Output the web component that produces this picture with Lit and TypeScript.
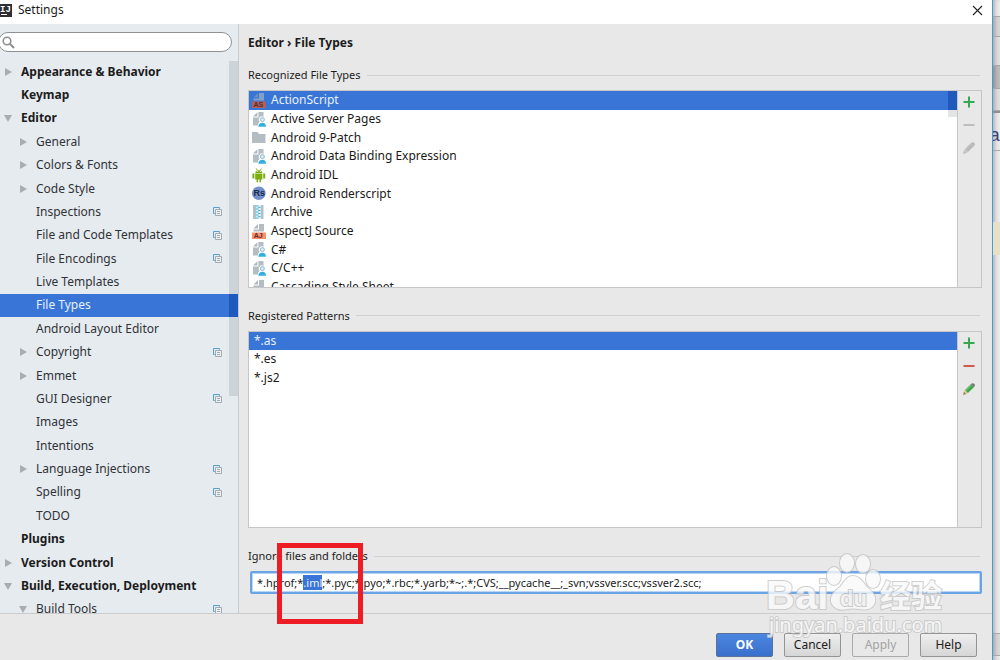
import { LitElement, html, css, svg, nothing } from "lit";
import { customElement, state, query } from "lit/decorators.js";
import { classMap } from "lit/directives/class-map.js";

interface TreeItem {
  label: string;
  level: 0 | 1;
  arrow?: "open" | "closed";
  project?: boolean;
}

const TREE: TreeItem[] = [
  { label: "Appearance & Behavior", level: 0, arrow: "closed" },
  { label: "Keymap", level: 0 },
  { label: "Editor", level: 0, arrow: "open" },
  { label: "General", level: 1, arrow: "closed" },
  { label: "Colors & Fonts", level: 1, arrow: "closed" },
  { label: "Code Style", level: 1, arrow: "closed" },
  { label: "Inspections", level: 1, project: true },
  { label: "File and Code Templates", level: 1, project: true },
  { label: "File Encodings", level: 1, project: true },
  { label: "Live Templates", level: 1 },
  { label: "File Types", level: 1 },
  { label: "Android Layout Editor", level: 1 },
  { label: "Copyright", level: 1, arrow: "closed", project: true },
  { label: "Emmet", level: 1, arrow: "closed" },
  { label: "GUI Designer", level: 1, project: true },
  { label: "Images", level: 1 },
  { label: "Intentions", level: 1 },
  { label: "Language Injections", level: 1, arrow: "closed", project: true },
  { label: "Spelling", level: 1, project: true },
  { label: "TODO", level: 1 },
  { label: "Plugins", level: 0 },
  { label: "Version Control", level: 0, arrow: "closed" },
  { label: "Build, Execution, Deployment", level: 0, arrow: "open" },
  { label: "Build Tools", level: 1, arrow: "open", project: true },
];

const FILE_TYPES: [string, string][] = [
  ["ActionScript", "as"],
  ["Active Server Pages", "user"],
  ["Android 9-Patch", "folder"],
  ["Android Data Binding Expression", "user"],
  ["Android IDL", "android"],
  ["Android Renderscript", "rs"],
  ["Archive", "archive"],
  ["AspectJ Source", "aj"],
  ["C#", "user"],
  ["C/C++", "user"],
  ["Cascading Style Sheet", "page"],
];

const PATTERNS = ["*.as", "*.es", "*.js2"];

const IGNORED =
  "*.hprof;*.iml;*.pyc;*.pyo;*.rbc;*.yarb;*~;.*;CVS;__pycache__;_svn;vssver.scc;vssver2.scc;";

const halfPage = svg`<path d="M1.5 4.5 L6 0 V4.5Z" fill="#9aa7b0" opacity=".8"/><path d="M7 0H12V7.5H1.5V5.5H7Z" fill="#b4bdc3"/>`;

const ICONS: Record<string, unknown> = {
  as: svg`<g opacity=".6">${halfPage}</g><path d="M0 8.5H14V15H0Z" fill="#b0605e"/><text x="1.4" y="14.4" class="tag">AS</text>`,
  aj: svg`${halfPage}<path d="M0 8.5H14V15H0Z" fill="#fb8f6c"/><text x="1.8" y="14.4" class="tag">AJ</text>`,
  page: svg`<path d="M1.5 4.5 L6 0 V4.5Z" fill="#9aa7b0" opacity=".8"/><path d="M7 0H12V14H1.5V5.5H7Z" fill="#b4bdc3"/>`,
  user: svg`<path d="M1 4.5 L5.4 .3 V4.5Z" fill="#9aa7b0" opacity=".8"/><path d="M6.4 0H11.5V5A3 3 0 0 0 7.6 9.5L6 12V13.5H1V5.5H6.4Z" fill="#b4bdc3"/><circle cx="10.4" cy="7.6" r="2" fill="#dce9ef" stroke="#8fbccf"/><path d="M6.3 14.8C6.6 12.1 8 10.8 10.4 10.8S13.8 12.1 14 14.8Z" fill="#2fb0e0"/>`,
  folder: svg`<path d="M0 2H5.5L7 4H13.5V13H0Z" fill="#b4bdc3"/>`,
  android: svg`<path d="M3.2 4.9A3.7 3.5 0 0 1 10.4 4.9ZM3.2 5.6H10.4V11.6H9V14.2H7.5V11.6H6.1V14.2H4.6V11.6H3.2ZM.4 5.6H2.4V10.4H.4ZM11.2 5.6H13.2V10.4H11.2Z" fill="#7cae12"/><path d="M4.2.4 5.3 2.4M9.4.4 8.3 2.4" stroke="#7cae12" stroke-width=".9"/><circle cx="5.3" cy="3.5" r=".5" fill="#fff"/><circle cx="8.3" cy="3.5" r=".5" fill="#fff"/>`,
  rs: svg`<circle cx="6.8" cy="7.2" r="6.8" fill="#7390cb"/><text x="1.6" y="10.2" class="round">Rs</text>`,
  archive: svg`<path d="M1 0H4V14H1ZM8.6 0H11.5V14H8.6Z" fill="#b4c0c7"/><path d="M4 0H8.6V14H4Z" fill="#d9f0f8"/><path d="M4 1H6.5M6 2.5H8.6M4 4H6.5M6 5.5H8.6M4 7H6.5M6 8.5H8.6M4 10H6.5M6 11.5H8.6M4 13H6.5" stroke="#4eb8dc" stroke-width="1.2"/>`,
};

const fileIcon = (name: string) =>
  html`<svg class="file-icon" width="14" height="15" viewBox="0 0 14 15" aria-hidden="true">${ICONS[name]}</svg>`;

const projectIcon = html`<svg class="project" width="9" height="9" viewBox="0 0 9 9" aria-hidden="true">
  <path d="M6.5 1.8V.5H.5V6.5H1.8" fill="none" stroke="#5d9fc4" />
  <path d="M2.5 2.5H8.5V8.5H2.5Z" fill="#eef1f3" stroke="#a2abb2" />
  <path d="M4 4.5H7M4 6.5H7" stroke="#a2abb2" />
</svg>`;

const plus = html`<svg width="12" height="12" viewBox="0 0 12 12" aria-hidden="true">
  <path d="M6 .5V11.5M.5 6H11.5" stroke="#36a852" stroke-width="2" />
</svg>`;
const minus = (color: string) => html`<svg width="12" height="12" viewBox="0 0 12 12" aria-hidden="true">
  <path d="M.5 6H11.5" stroke=${color} stroke-width="2" />
</svg>`;
const pencil = (active: boolean) => html`<svg width="12" height="12" viewBox="0 0 12 12" aria-hidden="true">
  <path d="M0 12 1 8.6 3.4 11Z" fill=${active ? "#8f8474" : "#b9b9b9"} />
  <path d="M1 8.6 2 7 5 10 3.4 11Z" fill=${active ? "#e8c48c" : "#c6c6c6"} />
  <path d="M2 7 7.8 1.2 10.8 4.2 5 10Z" fill=${active ? "#3fa64a" : "#b9b9b9"} />
  <path d="M3 7.4 8.3 2.2" stroke=${active ? "#8fd68f" : "#c6c6c6"} />
  <path d="M7.8 1.2 8.8.4Q10 -.2 11.2.8T11.6 3.2L10.8 4.2Z" fill=${active ? "#777" : "#b9b9b9"} />
</svg>`;

@customElement("app-root")
export class AppRoot extends LitElement {
  @state() private page = "File Types";
  @state() private fileType = 0;
  @state() private pattern = 0;
  @query("#ignored") private ignored!: HTMLInputElement;

  static styles = css`
    :host {
      display: block;
      font: 12px/16px "Noto Sans", "Noto Sans CJK SC", sans-serif;
      color: #1c1c1c;
    }
    * {
      box-sizing: border-box;
    }
    button,
    input {
      font: inherit;
      color: inherit;
    }
    ul {
      list-style: none;
      margin: 0;
      padding: 0;
    }
    h1,
    h2 {
      margin: 0;
      font-size: 12px;
    }
    .screen {
      position: relative;
      display: flex;
      height: 100vh;
      overflow: hidden;
    }
    .dialog {
      flex: 1;
      min-width: 0;
      display: flex;
      flex-direction: column;
      background: #e8e8e8;
      border-right: 1px solid #4a9ad6;
    }
    .titlebar {
      display: flex;
      align-items: center;
      gap: 6px;
      height: 24px;
      padding: 0 9px 4px 0;
      background: #fff;
    }
    .titlebar .name {
      flex: 1;
    }
    .logo text {
      font: bold 9px "Liberation Mono", monospace;
      fill: #fff;
    }
    .close {
      display: flex;
      padding: 0;
      border: 0;
      background: none;
    }
    .main {
      flex: 1;
      min-height: 0;
      display: flex;
      border-bottom: 1px solid #c9cbcd;
    }
    .sidebar {
      position: relative;
      flex: none;
      width: 239px;
      display: flex;
      flex-direction: column;
      background: #e6ebf0;
      border-right: 1px solid #c8cbcd;
      overflow: hidden;
    }
    .search {
      position: relative;
      display: flex;
      margin: 8px 6px 8px -2px;
    }
    .search input {
      width: 100%;
      height: 20px;
      padding: 0 10px 0 22px;
      border: 1px solid #8f9193;
      border-radius: 10px;
      background: #fff;
      outline: 0;
    }
    .search svg {
      position: absolute;
      left: 4px;
      top: 4px;
    }
    .tree {
      flex: 1;
      display: grid;
      grid-auto-rows: 1fr;
      margin-bottom: -8px;
    }
    .node {
      display: flex;
      align-items: center;
      min-height: 0;
      padding: 0 16px 0 4px;
      white-space: nowrap;
    }
    .node.top {
      font-weight: bold;
    }
    .node.child {
      padding-left: 19px;
      color: #303336;
    }
    .node .twisty {
      flex: none;
      width: 17px;
      display: flex;
    }
    .node .text {
      flex: 1;
    }
    .thumb {
      position: absolute;
      right: 0;
      width: 9px;
      background: rgba(0, 20, 40, 0.11);
    }
    .sidebar .thumb {
      top: 37px;
      height: 335px;
    }
    .cap {
      width: 9px;
      align-self: stretch;
      margin-left: auto;
      background: #2462cf;
    }
    .node.selected,
    .row.selected {
      padding-right: 0;
      background: #3875d7;
      color: #e8f0fb;
    }
    .pane {
      flex: 1;
      min-width: 0;
      display: flex;
      flex-direction: column;
      padding: 11px 10px 19px 9px;
    }
    .crumb {
      margin-bottom: 16px;
    }
    .section {
      display: flex;
      align-items: center;
      gap: 6px;
      margin-bottom: 7px;
    }
    .section h2,
    .section label {
      font-size: 11px;
      font-weight: normal;
    }
    .section::after {
      content: "";
      flex: 1;
      height: 1px;
      margin-right: 2px;
      background: #d0d0d0;
    }
    .box {
      flex: 1;
      min-height: 0;
      display: flex;
      margin-bottom: 20px;
      border: 1px solid #c6c6c6;
    }
    .list {
      position: relative;
      flex: 1;
      display: flex;
      flex-direction: column;
      background: #fff;
      overflow: hidden;
    }
    .types {
      flex: 1;
      display: grid;
      grid-auto-rows: 1fr;
      margin-bottom: -10px;
    }
    .patterns {
      display: grid;
      grid-auto-rows: 1fr;
      height: 56px;
    }
    .row {
      display: flex;
      align-items: center;
      gap: 5px;
      min-height: 0;
      padding-left: 3px;
      color: #1a1a1a;
    }
    .patterns .row {
      padding-left: 5px;
    }
    .list .thumb {
      top: 0;
      height: 26px;
    }
    .tag {
      font: bold 7px "Liberation Sans", sans-serif;
      fill: #5a2c2c;
    }
    .round {
      font: bold 9px "Liberation Sans", sans-serif;
      fill: #1d2a4a;
    }
    .tools {
      flex: none;
      width: 24px;
      display: flex;
      flex-direction: column;
      align-items: center;
      gap: 11px;
      padding: 5px 2px 0 0;
      border-left: 1px solid #c6c6c6;
    }
    .tools button {
      display: flex;
      padding: 0;
      border: 0;
      background: none;
    }
    .ignored {
      height: 23px;
      margin-left: 2px;
      padding: 0 5px;
      border: 2px solid #6ba4e4;
      border-radius: 2px;
      box-shadow: inset 0 0 0 1px #b9d6f6;
      background: #fff;
      font-size: 11px;
      outline: 0;
    }
    .ignored::selection {
      background: #3875d7;
      color: #e8f0fb;
    }
    .footer {
      display: flex;
      justify-content: flex-end;
      gap: 11px;
      height: 46px;
      padding: 19px 15px 0;
    }
    .footer button {
      width: 57px;
      height: 24px;
      padding: 0;
      border: 1px solid #949494;
      border-radius: 2px;
      background: linear-gradient(#eeeeee, #d6d6d6);
    }
    .footer .primary {
      border-color: #5b7199;
      background: linear-gradient(#4a86e0, #3a70cc);
      color: #fff;
      font-weight: bold;
    }
    .footer button:disabled {
      border-color: #aaa;
      background: #e8e8e8;
      color: #a2a2a2;
    }
    .behind {
      flex: none;
      width: 7px;
      display: flex;
      flex-direction: column;
      background: #ececec;
      overflow: hidden;
      box-shadow: inset 4px 0 4px -2px rgba(0, 0, 0, 0.25);
    }
    .behind div {
      flex: none;
      border-bottom: 1px solid #a8a8a8;
    }
    .b1 {
      height: 17px;
    }
    .b2 {
      height: 20px;
      background: rgba(0, 0, 0, 0.09);
    }
    .b3 {
      height: 29px;
      background: rgba(0, 0, 0, 0.05);
    }
    .b4 {
      height: 23px;
      background: rgba(0, 0, 0, 0.2);
    }
    .b5 {
      height: 22px;
      background: rgba(0, 0, 0, 0.05);
    }
    .b6 {
      display: flex;
      align-items: flex-end;
      height: 40px;
      padding-bottom: 2px;
      font: 19px/24px "Liberation Mono", monospace;
      color: #3b3f78;
      border-top: 2px solid #909090;
      text-indent: -4px;
    }
    .b7 {
      height: 71px;
    }
    .b8 {
      height: 33px;
      background: #e8e0c4;
    }
    .behind .b7,
    .behind .b8 {
      border-bottom: 0;
    }
    .behind .b9 {
      flex: 1;
    }
    .b10 {
      height: 22px;
      background: rgba(0, 0, 0, 0.08);
    }
    .behind .b11 {
      height: 4px;
      border-bottom: 0;
    }
    .marker {
      position: absolute;
      left: 277px;
      bottom: 36px;
      width: 86px;
      height: 81px;
      border: 5px solid #ee1c25;
      pointer-events: none;
    }
    .watermark {
      position: absolute;
      right: 54px;
      bottom: 18px;
      pointer-events: none;
    }
    .watermark .ink {
      fill: #fafafa;
      stroke: #c4c4c4;
      paint-order: stroke;
      stroke-width: 2px;
      opacity: 0.8;
    }
    .latin {
      font: bold 40px "Liberation Sans", sans-serif;
    }
    .inner {
      font: bold 22px "Liberation Sans", sans-serif;
      fill: #f4f4f4;
    }
    .han {
      font: bold 31px "Noto Sans CJK SC", sans-serif;
    }
    .site {
      font: 20px "Noto Sans", sans-serif;
    }
  `;

  protected firstUpdated() {
    const start = IGNORED.indexOf(".iml");
    this.ignored.focus();
    this.ignored.setSelectionRange(start, start + 4, "backward");
    this.ignored.scrollLeft = 0;
  }

  private twisty(arrow?: "open" | "closed") {
    if (!arrow) return nothing;
    const d = arrow === "open" ? "M0 1H8L4 8Z" : "M1 0V8L8 4Z";
    return html`<svg width="8" height="8" viewBox="0 0 8 8" aria-hidden="true"><path d=${d} fill="#a9adb0" /></svg>`;
  }

  private renderNode(item: TreeItem) {
    const selected = item.label === this.page;
    return html`<li
      role="treeitem"
      aria-selected=${selected}
      class=${classMap({ node: true, top: item.level === 0, child: item.level === 1, selected })}
      @click=${() => (this.page = item.label)}
    >
      <span class="twisty">${this.twisty(item.arrow)}</span>
      <span class="text">${item.label}</span>
      ${item.project ? projectIcon : nothing}${selected ? html`<span class="cap"></span>` : nothing}
    </li>`;
  }

  render() {
    return html`<div class="screen">
      <div class="dialog" role="dialog" aria-label="Settings">
        <header class="titlebar">
          <svg class="logo" width="12" height="13" viewBox="0 0 12 13" aria-hidden="true">
            <path d="M0 0H12V13H0Z" fill="#2f2f33" />
            <text x="0" y="8">IJ</text>
            <path d="M1 10.5H7" stroke="#fff" />
          </svg>
          <span class="name">Settings</span>
          <button class="close" aria-label="Close">
            <svg width="11" height="11" viewBox="0 0 11 11"><path d="M1 1 10 10M10 1 1 10" stroke="#222" stroke-width="1.1" /></svg>
          </button>
        </header>

        <div class="main">
          <nav class="sidebar">
            <div class="search">
              <input type="text" aria-label="Search settings" />
              <svg width="13" height="13" viewBox="0 0 13 13" aria-hidden="true">
                <circle cx="5" cy="5" r="3.8" fill="none" stroke="#8f8f8f" stroke-width="1.6" />
                <path d="M7.8 7.8 12 12" stroke="#8f8f8f" stroke-width="2" />
              </svg>
            </div>
            <ul class="tree" role="tree">${TREE.map((item) => this.renderNode(item))}</ul>
            <div class="thumb"></div>
          </nav>

          <main class="pane">
            <h1 class="crumb">Editor › File Types</h1>

            <div class="section"><h2>Recognized File Types</h2></div>
            <div class="box">
              <div class="list">
                <ul class="types" role="listbox" aria-label="Recognized File Types">
                  ${FILE_TYPES.map(
                    ([label, icon], i) => html`<li
                      role="option"
                      aria-selected=${i === this.fileType}
                      class=${classMap({ row: true, selected: i === this.fileType })}
                      @click=${() => (this.fileType = i)}
                    >
                      ${fileIcon(icon)}<span>${label}</span>${i === this.fileType ? html`<span class="cap"></span>` : nothing}
                    </li>`
                  )}
                </ul>
                <div class="thumb"></div>
              </div>
              <div class="tools">
                <button aria-label="Add file type">${plus}</button>
                <button aria-label="Remove file type" disabled>${minus("#bdbdbd")}</button>
                <button aria-label="Edit file type" disabled>${pencil(false)}</button>
              </div>
            </div>

            <div class="section"><h2>Registered Patterns</h2></div>
            <div class="box">
              <div class="list">
                <ul class="patterns" role="listbox" aria-label="Registered Patterns">
                  ${PATTERNS.map(
                    (label, i) => html`<li
                      role="option"
                      aria-selected=${i === this.pattern}
                      class=${classMap({ row: true, selected: i === this.pattern })}
                      @click=${() => (this.pattern = i)}
                    >
                      ${label}
                    </li>`
                  )}
                </ul>
              </div>
              <div class="tools">
                <button aria-label="Add pattern">${plus}</button>
                <button aria-label="Remove pattern">${minus("#cf5b4c")}</button>
                <button aria-label="Edit pattern">${pencil(true)}</button>
              </div>
            </div>

            <div class="section"><label for="ignored">Ignore files and folders</label></div>
            <input id="ignored" class="ignored" type="text" spellcheck="false" .value=${IGNORED} />
          </main>
        </div>

        <footer class="footer">
          <button class="primary">OK</button>
          <button>Cancel</button>
          <button disabled>Apply</button>
          <button>Help</button>
        </footer>
      </div>

      <div class="behind" aria-hidden="true">
        <div class="b1"></div>
        <div class="b2"></div>
        <div class="b3"></div>
        <div class="b4"></div>
        <div class="b5"></div>
        <div class="b6">a</div>
        <div class="b7"></div>
        <div class="b8"></div>
        <div class="b9"></div>
        <div class="b10"></div>
        <div class="b11"></div>
      </div>

      <div class="marker"></div>
      <svg class="watermark" width="180" height="90" viewBox="0 0 180 90">
        <g class="ink">
          <text class="latin" x="0" y="57">Bai</text>
          <ellipse cx="68" cy="24" rx="7" ry="9" />
          <ellipse cx="81" cy="11" rx="7" ry="9" />
          <ellipse cx="97" cy="12" rx="7" ry="9" />
          <ellipse cx="107" cy="27" rx="7" ry="9" />
          <path d="M87 24C94 24 97 31 102 36C108 41 110 45 109 50C107 58 99 58 93 57Q87 56 81 57C73 59 67 56 65 50C64 43 69 39 74 35C79 30 80 24 87 24Z" />
          <text class="inner" x="74" y="54">du</text>
          <text class="han" x="114" y="55">经验</text>
          <text class="site" x="3" y="80">jingyan.baidu.com</text>
        </g>
      </svg>
    </div>`;
  }
}
